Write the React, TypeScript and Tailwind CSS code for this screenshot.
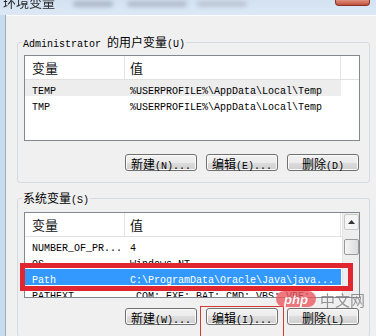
import React from "react";

const cjk = "font-['Noto_Sans_CJK_SC',sans-serif]";
const mono = "font-['Liberation_Mono','Noto_Sans_CJK_SC',monospace]";

const Txt = ({ s }: { s: string }) => {
  const parts = s.split(/([\u4e00-\u9fff]+)/);
  return (
    <span className="whitespace-pre">
      {parts.map((p, i) =>
        /[\u4e00-\u9fff]/.test(p) ? (
          <span key={i} className={`text-[12px] leading-none ${cjk}`}>
            {p}
          </span>
        ) : p ? (
          <span key={i} className={`text-[10px] leading-none ${mono}`}>
            {p}
          </span>
        ) : null
      )}
    </span>
  );
};

type Row = { name: string; value: string; state?: "focus" | "sel" };

const userVars: Row[] = [
  { name: "TEMP", value: "%USERPROFILE%\\AppData\\Local\\Temp", state: "focus" },
  { name: "TMP", value: "%USERPROFILE%\\AppData\\Local\\Temp" },
];

const sysVars: Row[] = [
  { name: "NUMBER_OF_PR...", value: "4" },
  { name: "OS", value: "Windows_NT" },
  { name: "Path", value: "C:\\ProgramData\\Oracle\\Java\\java...", state: "sel" },
  { name: "PATHEXT", value: ".COM;.EXE;.BAT;.CMD;.VBS;.VBE;..." },
];

const ListView = ({ rows, scroll }: { rows: Row[]; scroll?: boolean }) => (
  <div className="ml-[6px] w-[336px] h-[86px] border border-[#828790] bg-white flex overflow-hidden">
    <div className="flex-1 min-w-0 flex flex-col">
      <div className="flex h-[24px] border-b border-[#e2e2e2] bg-white shrink-0">
        <div className="w-[100px] border-r border-[#e5e5e5] pl-[7px] flex items-center">
          <span className={`text-[13px] text-[#111] ${cjk}`}>变量</span>
        </div>
        <div className="w-[216px] border-r border-[#e5e5e5] pl-[5px] flex items-center">
          <span className={`text-[13px] text-[#111] ${cjk}`}>值</span>
        </div>
        <div className="flex-1" />
      </div>
      {rows.map((r) => (
        <div key={r.name} className="flex h-[16px] shrink-0">
          <div
            className={`flex w-[316px] ${
              r.state === "sel"
                ? "bg-[#3399ff] text-white"
                : r.state === "focus"
                ? "bg-[#ededed] text-black"
                : "text-black"
            }`}
          >
            <div className="w-[100px] pl-[7px] flex items-center whitespace-nowrap overflow-hidden">
              <Txt s={r.name} />
            </div>
            <div className="w-[216px] pl-[5px] flex items-center whitespace-nowrap overflow-hidden">
              <Txt s={r.value} />
            </div>
          </div>
        </div>
      ))}
    </div>
    {scroll && (
      <div className="w-[17px] bg-[#eeeeee] border-l border-[#e4e4e4] flex flex-col items-center">
        <div className="w-[15px] h-[16px] mt-[1px] border border-[#c8c8c8] rounded-[2px] bg-[#f4f4f4] flex items-center justify-center">
          <svg width="7" height="4" viewBox="0 0 7 4">
            <polygon points="3.5,0 7,4 0,4" fill="#333" />
          </svg>
        </div>
        <div className="h-[9px]" />
        <div className="w-[15px] h-[16px] border border-[#9a9a9a] rounded-[2px] bg-[linear-gradient(90deg,#f4f4f4,#dcdcdc)]" />
      </div>
    )}
  </div>
);

const Btn = ({ label }: { label: string }) => (
  <div className="w-[72px] h-[17px] border border-[#707070] rounded-[3px] bg-[linear-gradient(#f2f2f2,#ebebeb_50%,#dddddd_50%,#cfcfcf)] shadow-[inset_0_0_0_1px_#fbfbfb] flex items-center justify-center text-black whitespace-nowrap">
    <Txt s={label} />
  </div>
);

const Group = ({
  title,
  rows,
  buttons,
  scroll,
  className,
  listTop,
  btnTop,
}: {
  title: string;
  rows: Row[];
  buttons: string[];
  scroll?: boolean;
  className?: string;
  listTop: string;
  btnTop: string;
}) => (
  <fieldset className={`border border-[#d5dbe0] rounded-[3px] m-0 p-0 min-w-0 ${className ?? ""}`}>
    <legend className="ml-[4px] px-[1px] leading-[14px] h-[14px] flex items-center text-black">
      <Txt s={title} />
    </legend>
    <div className={listTop}>
      <ListView rows={rows} scroll={scroll} />
    </div>
    <div className={`flex justify-end gap-[9px] mr-[10px] pb-[11px] ${btnTop}`}>
      {buttons.map((b) => (
        <Btn key={b} label={b} />
      ))}
    </div>
  </fieldset>
);

export default function App() {
  return (
    <div className="w-[376px] h-[336px] overflow-hidden flex flex-col bg-[#cddff1] relative">
      <div className="h-[15px] shrink-0 flex items-start overflow-hidden bg-[linear-gradient(#d3e2f2,#dce8f5)]">
        <span className={`ml-[3px] -mt-[8px] text-[13px] text-[#2a2a2a] blur-[0.7px] ${cjk}`}>
          环境变量
        </span>
        <div className="ml-[18px] mt-[1px] w-[40px] h-[6px] rounded-full bg-[#9aa6b4] blur-[2px] opacity-70" />
        <div className="ml-[14px] mt-[1px] w-[60px] h-[6px] rounded-full bg-[#a3aebb] blur-[2px] opacity-70" />
        <div className="ml-[10px] mt-[1px] w-[50px] h-[6px] rounded-full bg-[#aab4c0] blur-[2px] opacity-60" />
        <div className="ml-auto mr-[6px] w-[35px] h-[6px] rounded-b-[4px] border border-t-0 border-[#8a3228] bg-[linear-gradient(#e0907f,#c2503e)]" />
      </div>
      <div className="flex flex-1 min-h-0">
        <div className="w-[6px] shrink-0 bg-[#c8dbef] border-r border-[#98adc4]" />
        <div className="flex-1 bg-[#f0f0f0] border-t border-[#fafcfe] pl-[11px] pr-[6px] pt-[19px]">
          <Group
            title="Administrator 的用户变量(U)"
            rows={userVars}
            buttons={["新建(N)...", "编辑(E)...", "删除(D)"]}
            listTop="mt-[6px]"
            btnTop="mt-[13px]"
          />
          <Group
            title="系统变量(S)"
            rows={sysVars}
            buttons={["新建(W)...", "编辑(I)...", "删除(L)"]}
            scroll
            className="mt-[8px]"
            listTop="mt-[7px]"
            btnTop="mt-[10px]"
          />
        </div>
      </div>

      {/* annotation marks drawn over the dialog */}
      <div className="absolute left-[20px] top-[263px] w-[333px] h-[28px] border-[5px] border-[#e0262e]" />
      <div className="absolute left-[200px] top-[306px] w-[84px] h-[40px] border border-[#d23a35]" />

      {/* watermark */}
      <div className="absolute left-[276px] top-[291px] flex items-center gap-[4px] opacity-80">
        <div className="w-[40px] h-[16px] rounded-full bg-[#ea5a61] flex items-center justify-center">
          <span className="text-[13px] leading-none italic font-bold text-white font-['Liberation_Sans',sans-serif]">
            php
          </span>
        </div>
        <span className={`text-[15px] leading-none text-[#7d7d7d] ${cjk}`}>中文网</span>
      </div>
    </div>
  );
}
